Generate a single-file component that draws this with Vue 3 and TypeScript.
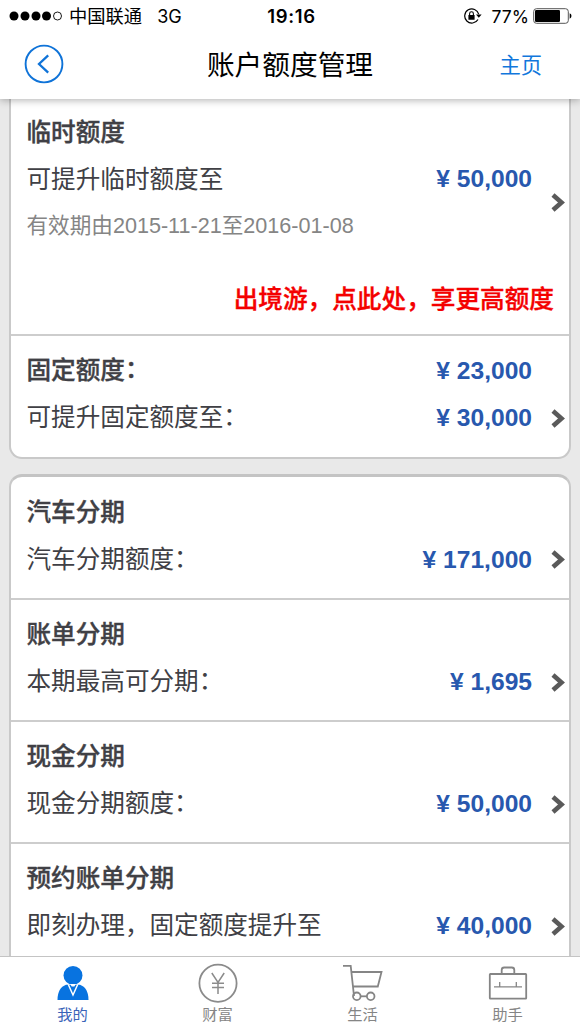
<script setup lang="ts">
interface Item {
  title: string
  label: string
  colon: boolean
  amount: string
}

const installments: Item[] = [
  { title: '汽车分期', label: '汽车分期额度', colon: true, amount: '171,000' },
  { title: '账单分期', label: '本期最高可分期', colon: true, amount: '1,695' },
  { title: '现金分期', label: '现金分期额度', colon: true, amount: '50,000' },
  { title: '预约账单分期', label: '即刻办理，固定额度提升至', colon: false, amount: '40,000' },
]
</script>

<template>
  <div class="screen">
    <header class="top">
      <div class="status">
        <div class="carrier">
          <svg class="signal" width="54" height="12" viewBox="0 0 54 12">
            <circle cx="5" cy="6" r="4.5" />
            <circle cx="16" cy="6" r="4.5" />
            <circle cx="27" cy="6" r="4.5" />
            <circle cx="37.5" cy="6" r="4.5" />
            <circle cx="48.5" cy="6" r="4" fill="none" stroke="#000" stroke-width="0.9" />
          </svg>
          <span class="operator">中国联通</span>
          <span class="network">3G</span>
        </div>
        <span class="clock">19:16</span>
        <div class="power">
          <svg width="19" height="16" viewBox="0 0 19 16">
            <path d="M15.700 6.200A7.100 7.100 0 1 0 15 11.500" fill="none" stroke="#000" stroke-width="1.200" />
            <path d="M13 6.400h5.600l-2.800 3.400z" />
            <rect x="5.400" y="7" width="6.200" height="4.800" rx="0.500" />
            <path d="M6.600 7.400V5.700a1.900 1.900 0 0 1 3.800 0v1.700" fill="none" stroke="#000" stroke-width="1.100" />
          </svg>
          <span class="percent">77%</span>
          <svg width="39" height="16" viewBox="0 0 39 16">
            <rect x="0.700" y="0.700" width="34.600" height="14.600" rx="2.800" fill="#fff" stroke="#555" stroke-width="1" />
            <rect x="2" y="2" width="25" height="12" rx="1.200" />
            <path d="M36.700 5.300q1.800 0.800 1.800 2.700t-1.800 2.700z" />
          </svg>
        </div>
      </div>
      <nav class="nav">
        <svg class="back" width="40" height="40" viewBox="0 0 40 40" fill="none" stroke="#0f73d8">
          <circle cx="20" cy="20" r="18.400" stroke-width="1.900" />
          <path d="M24.200 11.300L15 20l9.200 8.700" stroke-width="2.300" />
        </svg>
        <h1>账户额度管理</h1>
        <a class="home">主页</a>
      </nav>
    </header>

    <main class="content">
      <section class="card card-first">
        <div class="entry temporary">
          <h2>临时额度</h2>
          <div class="line"><span>可提升临时额度至</span><b class="amount">¥ 50,000</b></div>
          <p class="period">有效期由2015-11-21至2016-01-08</p>
          <p class="promo">出境游，点此处，享更高额度</p>
          <svg class="arrow" width="14" height="19" viewBox="0 0 14 19"><path d="M2 2l8.500 7.500L2 17" /></svg>
        </div>
        <div class="entry">
          <div class="line"><h2>固定额度<span class="colon">：</span></h2><b class="amount">¥ 23,000</b></div>
          <div class="line"><span>可提升固定额度至<span class="colon">：</span></span><b class="amount">¥ 30,000</b></div>
          <svg class="arrow" width="14" height="19" viewBox="0 0 14 19"><path d="M2 2l8.500 7.500L2 17" /></svg>
        </div>
      </section>

      <section class="card card-second">
        <div v-for="item in installments" :key="item.title" class="entry">
          <h2>{{ item.title }}</h2>
          <div class="line">
            <span>{{ item.label }}<span v-if="item.colon" class="colon">：</span></span>
            <b class="amount">¥ {{ item.amount }}</b>
          </div>
          <svg class="arrow" width="14" height="19" viewBox="0 0 14 19"><path d="M2 2l8.500 7.500L2 17" /></svg>
        </div>
      </section>
    </main>

    <footer class="tabs">
      <div class="tab active">
        <svg width="42" height="40" viewBox="0 0 42 40" fill="#0873e0">
          <circle cx="21" cy="12.400" r="9.500" />
          <path d="M5.500 37c0-8 3-13.200 8.500-15.200h14C33.500 23.800 36.500 29 36.500 37z" />
          <path d="M16.300 21.500L21 32l4.700-10.500" fill="none" stroke="#fff" stroke-width="1.500" />
          <path d="M18 21h6l-1.700 2.500h-2.600z" fill="#fff" />
        </svg>
        <span>我的</span>
      </div>
      <div class="tab">
        <svg width="42" height="40" viewBox="0 0 42 40" fill="none" stroke="#8b8b8b">
          <circle cx="21" cy="20.300" r="18.600" stroke-width="1.800" />
          <path d="M14.800 10L21 19.500 27.200 10M21 19.500V31M15 20.200h12M15 24.500h12" stroke-width="1.500" />
        </svg>
        <span>财富</span>
      </div>
      <div class="tab">
        <svg width="42" height="40" viewBox="0 0 42 40" fill="none" stroke="#858585" stroke-width="1.800">
          <path d="M1 2.800h7.700L12 33M9.300 9h30.200l-3.700 14.500H11" />
          <circle cx="14.800" cy="33.300" r="3.800" />
          <circle cx="28.700" cy="33.300" r="3.800" />
          <path d="M18.600 33.300h6.300" />
        </svg>
        <span>生活</span>
      </div>
      <div class="tab">
        <svg width="42" height="40" viewBox="0 0 42 40" fill="none" stroke="#858585" stroke-width="1.800">
          <rect x="2.800" y="11" width="36.400" height="24.700" rx="0.600" />
          <path d="M14.700 11V7q0-2.500 2.500-2.500h7.600q2.500 0 2.500 2.500v4" />
          <path d="M7 23.900h28M12.700 19v5M29.300 19v5" stroke-width="1.300" />
        </svg>
        <span>助手</span>
      </div>
    </footer>
  </div>
</template>

<style>
body {
  margin: 0;
}
</style>

<style scoped>
.screen {
  display: flex;
  flex-direction: column;
  width: 580px;
  height: 1032px;
  overflow: hidden;
  background: #e9e9e9;
  color: #404045;
  font-family: "Liberation Sans", "Noto Sans CJK SC", sans-serif;
}

h1,
h2,
p {
  margin: 0;
}

svg {
  display: block;
  flex: none;
}

.top {
  position: relative;
  z-index: 1;
  flex: none;
  height: 99px;
  background: #fff;
  color: #000;
  box-shadow: 0 1px 8px rgba(0, 0, 0, 0.32);
}

.status {
  display: grid;
  grid-template-columns: 1fr auto 1fr;
  align-items: center;
  height: 32px;
  padding: 0 8px 0 9px;
}

.carrier,
.power {
  display: flex;
  align-items: center;
}

.operator {
  margin-left: 6px;
  padding-top: 1px;
  font-size: 18.3px;
  line-height: 30px;
}

.network {
  margin-left: 15px;
  font-family: Inter, sans-serif;
  font-size: 18px;
}

.clock {
  padding-left: 2px;
  font-family: Inter, sans-serif;
  font-size: 18.5px;
  font-weight: 600;
  letter-spacing: 0.7px;
}

.power {
  justify-content: flex-end;
}

.percent {
  margin: 0 4px 0 9px;
  font-family: Inter, sans-serif;
  font-size: 17.6px;
}

.nav {
  display: grid;
  grid-template-columns: 1fr auto 1fr;
  align-items: center;
  height: 64px;
  padding: 0 38px 0 24px;
}

.nav h1 {
  padding: 3px 0 0 14px;
  font-size: 27.7px;
  font-weight: 400;
  line-height: 60px;
}

.home {
  justify-self: end;
  padding-top: 4px;
  color: #1177dc;
  font-size: 21.3px;
  line-height: 40px;
}

.content {
  flex: 1;
  min-height: 0;
  overflow: hidden;
  padding: 0 9px;
}

.card {
  border: 2px solid #c9c9c9;
  background: #fff;
}

.card-first {
  border-top: 0;
  border-radius: 0 0 13px 13px;
}

.card-second {
  margin-top: 15px;
  border-radius: 13px 13px 0 0;
  border-top: 3px solid #c4c4c4;
}

.entry {
  position: relative;
  box-sizing: border-box;
  height: 122px;
  padding: 12px 37px 0 16px;
  border-bottom: 2px solid #cdcdcd;
}

.entry:last-child {
  border-bottom: 0;
}

.card-first .entry:last-child {
  height: 121px;
}

.card-second .entry {
  padding-top: 13px;
}

.card-second .entry:first-child {
  height: 123px;
}

.card-second .entry:not(:first-child) {
  padding-top: 12px;
}

.temporary {
  height: 237px;
  padding-top: 11px;
}

.entry h2,
.line {
  font-size: 24.6px;
  line-height: 46.5px;
}

.entry h2 {
  font-weight: 500;
  -webkit-text-stroke: 0.35px currentColor;
}

.line {
  display: flex;
  justify-content: space-between;
  height: 46.5px;
  white-space: nowrap;
}

.line > span,
.line > h2,
.entry > h2 {
  margin-left: -0.5px;
}

.colon {
  position: relative;
  top: -1px;
}

.amount {
  color: #2858ae;
}

.temporary .amount {
  margin-top: -1px;
}

.period {
  margin-left: -0.5px;
  color: #858585;
  font-size: 21.6px;
  line-height: 46px;
}

.promo {
  margin: 28px -22px 0 0;
  color: #f40000;
  font-size: 24.65px;
  font-weight: 500;
  -webkit-text-stroke: 0.35px currentColor;
  line-height: 46px;
  text-align: right;
  white-space: nowrap;
}

.arrow {
  position: absolute;
  right: 4px;
  top: 73px;
  fill: none;
  stroke: #5a5a5a;
  stroke-width: 4.6;
}

.temporary .arrow {
  top: 94px;
}

.tabs {
  display: grid;
  grid-template-columns: repeat(4, 1fr);
  flex: none;
  box-sizing: border-box;
  height: 76px;
  padding-top: 6px;
  border-top: 1px solid #c4c4c4;
  background: #fff;
}

.tab {
  display: flex;
  flex-direction: column;
  align-items: center;
  color: #858585;
  font-size: 15.3px;
  line-height: 24px;
}

.active {
  color: #3a63b8;
}
</style>
